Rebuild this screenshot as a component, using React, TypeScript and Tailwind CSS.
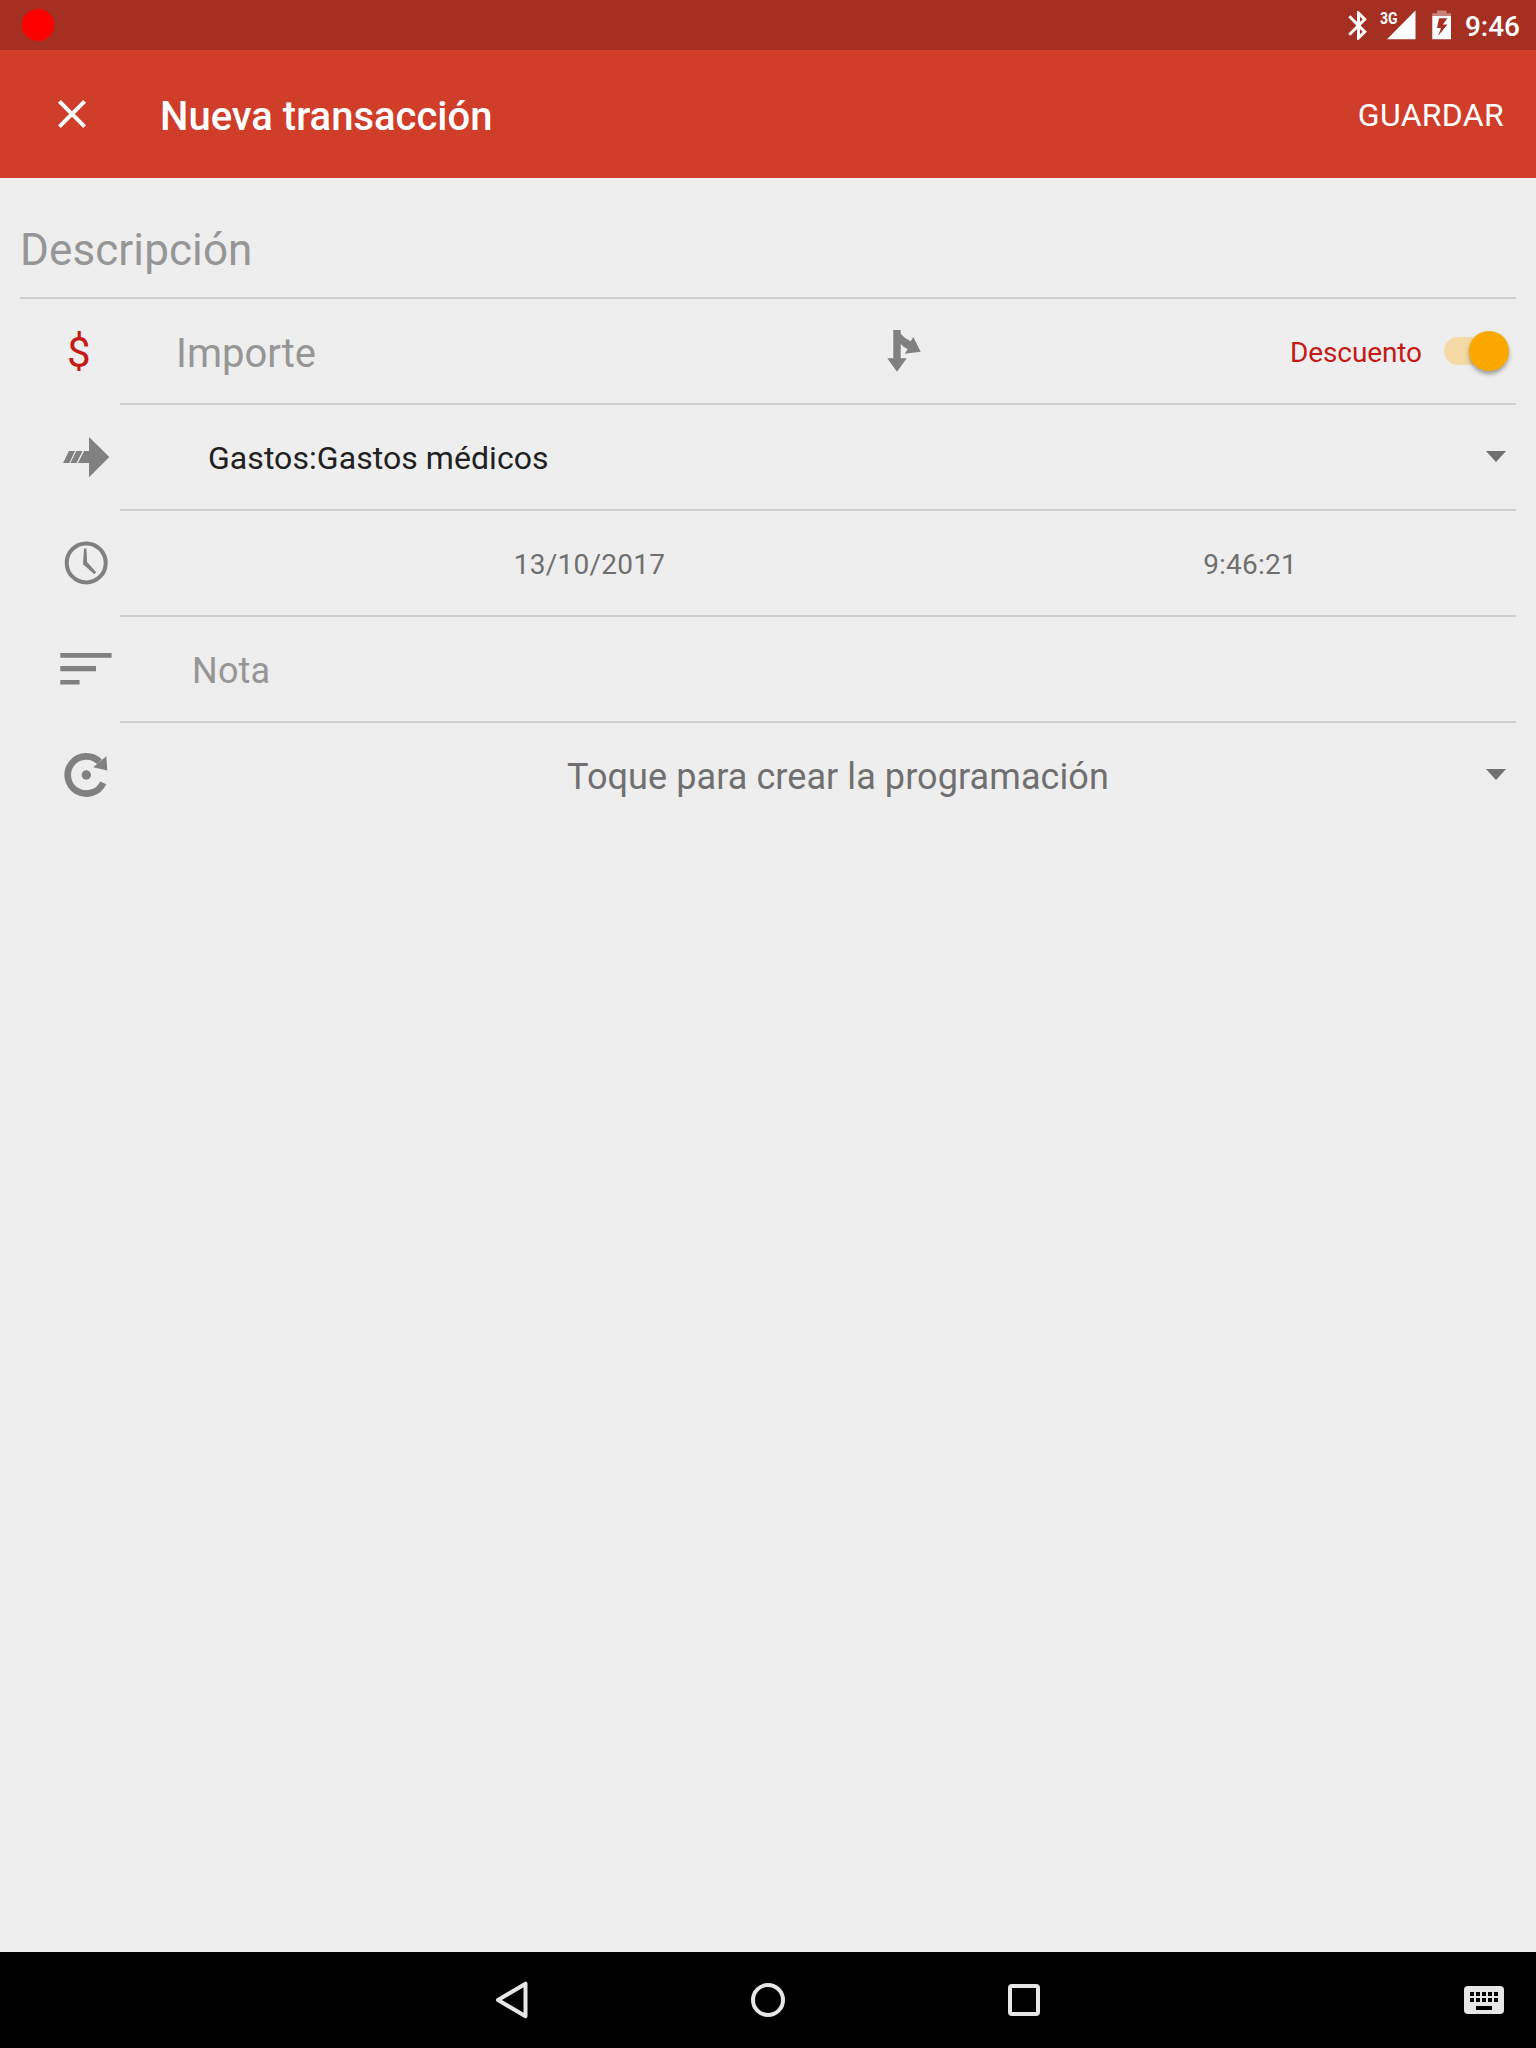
import type { ReactNode } from "react";

function StatusBar() {
  return (
    <div className="flex h-[50px] items-center justify-between bg-[#a53021] pr-4 pl-[21.500px]">
      <div className="size-[32.500px] rounded-full bg-[#ff0000]" />
      <div className="flex h-full items-center text-white">
        <svg className="mr-[4px] h-[35px] w-[35px]" viewBox="0 0 24 24" fill="currentColor">
          <path d="M17.71 7.71L12 2h-1v7.59L6.41 5 5 6.41 10.59 12 5 17.59 6.41 19 11 14.41V22h1l5.71-5.71-4.3-4.29 4.3-4.29zM13 5.83l1.88 1.88L13 9.59V5.83zm1.88 10.46L13 18.17v-3.76l1.88 1.88z" />
        </svg>
        <div className="relative h-full w-[36px]">
          <span className="absolute top-[9px] left-0 origin-left scale-x-[0.82] text-[17px] leading-[18px] font-bold">3G</span>
          <svg className="absolute top-[10px] left-[6px] h-[30px] w-[30px]" viewBox="0 0 30 30" fill="currentColor">
            <path d="M29.5 .5V29.2H1z" />
          </svg>
        </div>
        <svg className="mr-[13px] ml-[16px] h-[30px] w-[20px]" viewBox="0 0 20 30" fill="currentColor">
          <path d="M5.2 0.5H14.5V3.2H19V6H.3V3.2H5.2z" opacity=".4" />
          <path fillRule="evenodd" d="M.3 6H19V29.2H.3zM7 8.2L5 18H9L6 26L15.5 14.5H10.800L15.5 8.2z" />
        </svg>
        <span className="pt-[3px] text-[28px] leading-8 font-medium">9:46</span>
      </div>
    </div>
  );
}

function AppBar() {
  return (
    <header className="flex h-32 items-center bg-[#d03d29] pr-8 pl-12 text-white">
      <svg className="size-12" viewBox="0 0 24 24" fill="currentColor">
        <path d="M19 6.41L17.59 5 12 10.59 6.41 5 5 6.41 10.59 12 5 17.59 6.41 19 12 13.41 17.59 19 19 17.59 13.41 12z" />
      </svg>
      <h1 className="ml-16 pt-[6px] text-[40px] leading-12 font-medium">Nueva transacción</h1>
      <button className="ml-auto pt-[2px] text-[32px] leading-10 tracking-[0.3px]">GUARDAR</button>
    </header>
  );
}

function Row({ icon, children, last }: { icon: ReactNode; children: ReactNode; last?: boolean }) {
  return (
    <div className="flex h-[106px]">
      <div className="flex h-[104px] w-[100px] items-center pl-9 text-[#808080]">{icon}</div>
      <div className={last ? "flex flex-1 items-center border-b-2 border-transparent" : "flex flex-1 items-center border-b-2 border-[#d0d0d0]"}>
        {children}
      </div>
    </div>
  );
}

function ExpenseIcon() {
  return (
    <svg className="size-[60px]" viewBox="0 0 60 60" fill="currentColor">
      <path d="M33 10L53.3 30L33 50.3V36H22L28.1 24H33zM7 36L13 24H19L13.4 36zM14.4 36L20.3 24H26.500L20.5 36z" />
    </svg>
  );
}

function ClockIcon() {
  return (
    <svg className="size-[60px]" viewBox="0 0 60 60" fill="currentColor">
      <circle cx="30.2" cy="29.9" r="19.5" fill="none" stroke="currentColor" strokeWidth="4" />
      <path d="M28 15.500H30.4L31.1 29L40.2 39.3L38.3 41.2L27 31.3z" />
    </svg>
  );
}

function NoteIcon() {
  return (
    <svg className="size-[60px]" viewBox="0 0 60 60" fill="currentColor">
      <path d="M4.3 14H55.6V18.800H4.300zM4.3 27.100H40V32.300H4.3zM4.3 41H23.6V45.600H4.3z" />
    </svg>
  );
}

function RepeatIcon() {
  return (
    <svg className="size-[60px]" viewBox="0 0 60 60" fill="currentColor">
      <path d="M47.2 37.8A18.6 18.6 0 1 1 43.5 16.9" fill="none" stroke="currentColor" strokeWidth="6.7" />
      <path d="M50.3 11.3L51.3 25.4L37.2 22.3z" />
      <circle cx="30.3" cy="30" r="4.7" />
    </svg>
  );
}

function Caret() {
  return (
    <svg className="mr-[10px] mb-px h-[11px] w-5" viewBox="0 0 20 11" fill="#707070">
      <path d="M0 0H20L10 11z" />
    </svg>
  );
}

export default function App() {
  return (
    <div className="flex h-[2048px] w-[1536px] flex-col bg-[#eeeeee] font-['Roboto',sans-serif]">
      <StatusBar />
      <AppBar />
      <main className="flex-1 px-5">
        <div className="flex h-[121px] items-center border-b-2 border-[#d0d0d0] pt-[25px] text-[44px] leading-[52px] tracking-[0.1px] text-[#969696]">
          Descripción
        </div>

        <Row icon={<span className="ml-[11px] pt-1 text-[42px] leading-none text-[#c51a17]">$</span>}>
          <span className="ml-14 w-[704px] pt-[6px] text-[40px] leading-12 text-[#969696]">Importe</span>
          <svg className="size-12 text-[#808080]" viewBox="0 0 48 48" fill="currentColor">
            <path d="M13.3 3H20.7V6.7Q25 12 30.7 14.3L33.3 10L40.7 24.7L24.7 26.7L27.7 22.3Q23.5 20 20.7 17V31.3H26.7L17 44.7L7.3 31.3H13.3z" />
          </svg>
          <span className="ml-auto pt-1 text-[28px] leading-8 tracking-[-0.1px] text-[#c51a17]">Descuento</span>
          <div className="relative mr-[7px] ml-[22px] flex h-10 w-[65px] items-center">
            <div className="h-7 w-[58px] rounded-full bg-[#f5daa6]" />
            <div className="absolute top-0 right-0 size-10 rounded-full bg-[#fba900] shadow-[0_3px_4px_rgba(0,0,0,0.35)]" />
          </div>
        </Row>

        <Row icon={<ExpenseIcon />}>
          <span className="ml-[88px] flex-1 pt-[2px] text-[32px] leading-10 tracking-[0.06px] text-[#212121]">Gastos:Gastos médicos</span>
          <Caret />
        </Row>

        <Row icon={<ClockIcon />}>
          <span className="ml-[75px] w-[789px] pt-1 text-center text-[28px] leading-8 tracking-[0.25px] text-[#707070]">13/10/2017</span>
          <span className="flex-1 pt-1 text-center text-[28px] leading-8 tracking-[0.2px] text-[#707070]">9:46:21</span>
        </Row>

        <Row icon={<NoteIcon />}>
          <span className="ml-[72px] pt-1 text-[36px] leading-11 tracking-[0.2px] text-[#969696]">Nota</span>
        </Row>

        <Row icon={<RepeatIcon />} last>
          <span className="mr-[2px] ml-[72px] flex-1 pt-1 text-center text-[36px] leading-11 tracking-[0.08px] text-[#707070]">
            Toque para crear la programación
          </span>
          <Caret />
        </Row>
      </main>

      <nav className="flex h-24 items-center bg-black pr-8 text-[#e6e6e6]">
        <div className="ml-96 flex w-64 justify-center">
          <svg className="size-12" viewBox="0 0 48 48" fill="none" stroke="currentColor" strokeWidth="4" strokeLinejoin="round">
            <path d="M10 24L37.5 7.7V40.3z" />
          </svg>
        </div>
        <div className="flex w-64 justify-center">
          <div className="size-[34px] rounded-full border-4 border-current" />
        </div>
        <div className="flex w-64 justify-center">
          <div className="size-8 rounded-[4px] border-4 border-current" />
        </div>
        <svg className="ml-auto h-7 w-10" viewBox="0 0 40 28">
          <rect width="40" height="28" rx="4" fill="currentColor" />
          <path
            d="M6 6h4v4H6zM12 6h4v4h-4zM18 6h4v4h-4zM24 6h4v4h-4zM30 6h4v4h-4zM6 12h4v4H6zM12 12h4v4h-4zM18 12h4v4h-4zM24 12h4v4h-4zM30 12h4v4h-4zM12 20h16v4H12z"
            fill="#000"
          />
        </svg>
      </nav>
    </div>
  );
}
